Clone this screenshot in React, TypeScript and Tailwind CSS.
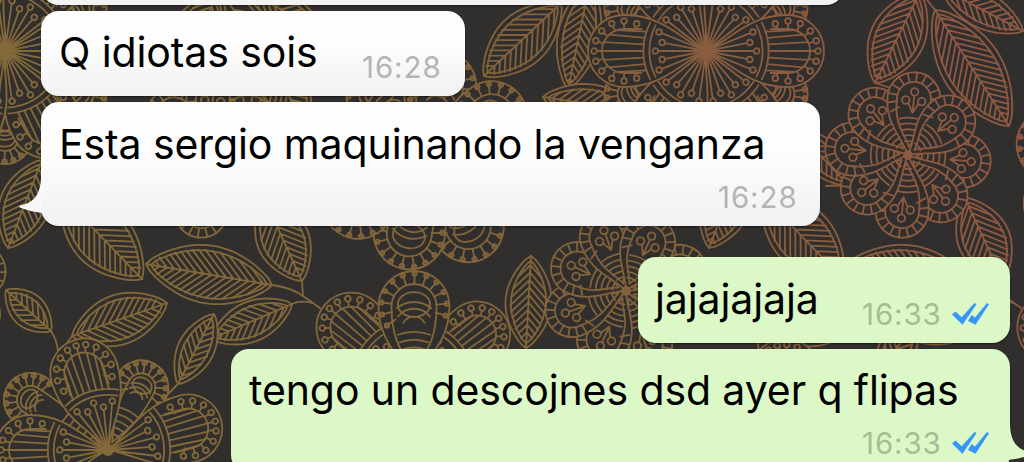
import React from "react";

type Pt = [number, number];

const line = (pts: Pt[], close = false) =>
  "M" + pts.map(([x, y]) => `${x.toFixed(1)} ${y.toFixed(1)}`).join("L") + (close ? "Z" : "");

/* A leaf drawn between two points: double outline, midrib and slanted veins. */
function Leaf({ a, b, w }: { a: Pt; b: Pt; w: number }) {
  const len = Math.hypot(b[0] - a[0], b[1] - a[1]);
  const ang = (Math.atan2(b[1] - a[1], b[0] - a[0]) * 180) / Math.PI;
  const half = (t: number, k: number) => k * Math.pow(Math.sin(Math.PI * Math.min(1, Math.max(0, t))), 0.74);
  const outline = (from: number, to: number, k: number): Pt[] => {
    const top: Pt[] = [];
    const low: Pt[] = [];
    for (let i = 0; i <= 30; i++) {
      const t = i / 30;
      top.push([from + (to - from) * t, -half(t, k)]);
      low.unshift([from + (to - from) * t, half(t, k)]);
    }
    return [...top, ...low];
  };
  const from = 5;
  const to = len - 5;
  const k = w / 2 - 5.5;
  let veins = "";
  for (let x = from + 4; x < to - 5; x += 7.5) {
    for (const s of [-1, 1]) {
      let d = 0;
      while (d < 40 && d * 0.95 < half((x + d - from) / (to - from), k)) d += 1;
      veins += line([[x, 0], [x + d, s * d * 0.95]]);
    }
  }
  return (
    <g transform={`translate(${a[0]} ${a[1]}) rotate(${ang})`}>
      <path d={line(outline(0, len, w / 2), true)} fill="#000" />
      <path d={line(outline(from, to, k), true)} />
      <path d={line([[0, 0], [len, 0]]) + veins} />
    </g>
  );
}

const tear = (len: number, w: number, x0 = 0) => {
  const r = w / 2;
  return `M${x0} 0C${x0 + (len - x0) * 0.2} ${-w * 0.14} ${len * 0.35} ${-r} ${len - r} ${-r}A${r} ${r} 0 0 1 ${len - r} ${r}C${len * 0.35} ${r} ${x0 + (len - x0) * 0.2} ${w * 0.14} ${x0} 0Z`;
};

const rad = (d: number) => (d * Math.PI) / 180;

const arc = (cx: number, r: number, deg: number) => {
  const x = cx + r * Math.cos(rad(deg));
  const y = r * Math.sin(rad(deg));
  return `M${x} ${-y}A${r} ${r} 0 0 1 ${x} ${y}`;
};

/* Long petal: a beaded rim, a fan of rays and stamens. */
function BeadPetal({ len, w, angle }: { len: number; w: number; angle: number }) {
  const r = w / 2;
  const c = len - r;
  const ri = r - 14;
  const rim = [-115, -90, -66, -42, -20, 0, 20, 42, 66, 90, 115];
  const mid = len * 0.48;
  return (
    <g transform={`rotate(${angle})`}>
      <path d={tear(len, w)} fill="#000" />
      {rim.map((d) => (
        <g key={d}>
          <circle cx={c + (r - 6) * Math.cos(rad(d))} cy={(r - 6) * Math.sin(rad(d))} r={2.8} />
          <path d={`M${c + ri * Math.cos(rad(d))} ${ri * Math.sin(rad(d))}L${c + (r - 9) * Math.cos(rad(d))} ${(r - 9) * Math.sin(rad(d))}`} />
        </g>
      ))}
      <path d={`M${mid + 8} ${-ri}L${c} ${-ri}A${ri} ${ri} 0 0 1 ${c} ${ri}L${mid + 8} ${ri}`} />
      <path d={arc(0, mid, 27) + arc(0, mid + 6, 27)} />
      {[-18, -12, -6, 0, 6, 12, 18].map((d) => (
        <path
          key={d}
          d={`M${(mid + 6) * Math.cos(rad(d))} ${(mid + 6) * Math.sin(rad(d))}L${c + ri * Math.cos(rad(d * 4))} ${ri * Math.sin(rad(d * 4))}`}
        />
      ))}
      {[-22, -11, 0, 11, 22].map((d, i) => {
        const q = i % 2 ? mid - 12 : mid - 6;
        return (
          <g key={d}>
            <path d={`M0 0L${(q - 3) * Math.cos(rad(d))} ${(q - 3) * Math.sin(rad(d))}`} />
            <circle cx={q * Math.cos(rad(d))} cy={q * Math.sin(rad(d))} r={2.8} />
          </g>
        );
      })}
    </g>
  );
}

/* Round petal: a spoked rim around three beads and nested arcs. */
function SpokePetal({ len, w, angle, ringed }: { len: number; w: number; angle: number; ringed?: boolean }) {
  const r = w / 2;
  const c = len - r;
  const ri = ringed ? r - 13 : r - 9.5;
  const spokes: number[] = [];
  for (let d = -125; d <= 125; d += 21) spokes.push(d);
  return (
    <g transform={`rotate(${angle})`}>
      <path d={tear(len, w)} fill="#000" />
      <path d={tear(c + ri, ri * 2, 8)} />
      {spokes.map((d) => (
        <path
          key={d}
          d={`M${c + ri * Math.cos(rad(d))} ${ri * Math.sin(rad(d))}L${c + r * Math.cos(rad(d))} ${r * Math.sin(rad(d))}`}
        />
      ))}
      {ringed ? (
        <>
          {spokes.map((d) => (
            <circle key={d} cx={c + (r - 2.5) * Math.cos(rad(d))} cy={(r - 2.5) * Math.sin(rad(d))} r={2.2} />
          ))}
          <ellipse cx={c + 2} cy={0} rx={ri * 0.55} ry={ri * 0.72} />
          <path d={arc(c - ri, ri * 0.9, 52) + arc(c - ri, ri * 1.2, 40) + arc(c - ri, ri * 0.55, 60)} />
        </>
      ) : (
        <>
          <circle cx={c + 7} cy={0} r={3.8} />
          <circle cx={c - 2} cy={-8} r={3.8} />
          <circle cx={c - 2} cy={8} r={3.8} />
          <path d={`M${c - 14} 0L${c + 3} 0M${c - 14} 0L${c - 5} -5M${c - 14} 0L${c - 5} 5`} />
        </>
      )}
      <path d={arc(0, len * 0.45, 19) + arc(0, len * 0.38, 20) + arc(0, len * 0.31, 20) + arc(0, len * 0.24, 20) + arc(0, len * 0.17, 20)} />
    </g>
  );
}

function Rosette({ x, y, n, len, w, turn, ringed }: { x: number; y: number; n: number; len: number; w: number; turn: number; ringed?: boolean }) {
  return (
    <g transform={`translate(${x} ${y})`}>
      {Array.from({ length: n }, (_, i) => (
        <SpokePetal key={i} len={len - (i % 2) * 4} w={w} angle={turn + (i * 360) / n} ringed={ringed} />
      ))}
      <circle r={4} fill="#fff" />
    </g>
  );
}

type Petal = { angle: number; len: number; w: number; round?: boolean };

function BigFlower({ x, y, petals }: { x: number; y: number; petals: Petal[] }) {
  return (
    <g transform={`translate(${x} ${y})`}>
      {petals.map(({ round, ...p }) => (round ? <SpokePetal key={p.angle} {...p} ringed /> : <BeadPetal key={p.angle} {...p} />))}
      <circle r={5} fill="#fff" />
    </g>
  );
}

const LEAVES: { a: Pt; b: Pt; w: number }[] = [
  { a: [561, 3], b: [484, 76], w: 52 },
  { a: [590, -18], b: [568, 89], w: 42 },
  { a: [543, 97], b: [640, 112], w: 40 },
  { a: [219, -8], b: [174, 83], w: 54 },
  { a: [234, 10], b: [308, 126], w: 60 },
  { a: [240, -12], b: [322, 31], w: 36 },
  { a: [94, 128], b: [147, 185], w: 34 },
  { a: [42, 160], b: [8, 248], w: 50 },
  { a: [62, 196], b: [142, 279], w: 60 },
  { a: [272, 285], b: [146, 264], w: 58 },
  { a: [264, 198], b: [302, 281], w: 52 },
  { a: [72, 336], b: [167, 303], w: 50 },
  { a: [51, 331], b: [6, 290], w: 34 },
  { a: [292, 304], b: [211, 339], w: 40 },
  { a: [178, 384], b: [214, 314], w: 36 },
  { a: [531, 256], b: [526, 348], w: 46 },
];

const SUN: Petal[] = [
  ...[30, 90, 150, 210, 270, 330].map((angle) => ({ angle, len: 113, w: 54, round: true })),
  ...[60, 120, 240, 300, 0, 180].map((angle) => ({ angle, len: 118, w: 72 })),
];

const CORNER: Petal[] = [
  { angle: -147, len: 119, w: 54, round: true },
  { angle: -62, len: 98, w: 54, round: true },
  { angle: 180, len: 113, w: 70 },
  { angle: -107, len: 115, w: 68 },
  { angle: -15, len: 117, w: 68 },
];

const SPRAY: Petal[] = [
  { angle: -139, len: 118, w: 70 },
  { angle: -37, len: 112, w: 66 },
  { angle: -90, len: 111, w: 71, round: true },
];

function Tile({ dx }: { dx: number }) {
  return (
    <g transform={`translate(${dx} 0)`}>
      {LEAVES.map((l, i) => (
        <Leaf key={i} {...l} />
      ))}
      <path d="M272 285Q290 287 303 296L320 308M302 281L303 296M292 304Q300 300 312 303M72 336L62 350M51 331Q56 338 58 350M178 384L164 398M234 10L223 -4M174 83L190 88M147 185L125 186" />
      <Rosette x={425} y={160} n={8} len={115} w={71} turn={57} ringed />
      <Rosette x={207} y={155} n={8} len={83} w={53} turn={6} />
      <BigFlower x={414} y={382} petals={SPRAY} />
      <Rosette x={626} y={291} n={8} len={84} w={53} turn={-20} />
      <BigFlower x={5} y={51} petals={SUN} />
      <BigFlower x={108} y={450} petals={CORNER} />
    </g>
  );
}

function Wallpaper() {
  return (
    <svg className="absolute inset-0 h-[462px] w-[1024px]" viewBox="0 0 1024 462" aria-hidden="true">
      <defs>
        <linearGradient id="ink" gradientUnits="userSpaceOnUse" x1="250" y1="430" x2="960" y2="80">
          <stop offset="0" stopColor="#83693a" />
          <stop offset="0.5" stopColor="#82623a" />
          <stop offset="1" stopColor="#8f5842" />
        </linearGradient>
        <mask id="lace" maskUnits="userSpaceOnUse" x="0" y="0" width="1024" height="462">
          <g fill="none" stroke="#fff" strokeWidth="1.8" strokeLinejoin="round" strokeLinecap="round">
            <Tile dx={-701} />
            <Tile dx={0} />
            <Tile dx={701} />
          </g>
        </mask>
      </defs>
      <rect width="1024" height="462" fill="url(#ink)" mask="url(#lace)" />
    </svg>
  );
}

function Ticks() {
  return (
    <svg className="ml-[8px] h-6 w-[38px] shrink-0" viewBox="0 0 38 24" fill="#3497f9" aria-hidden="true">
      <path d="M0 12.6L3.6 9.4L9.6 15.2L22.5 1L24.5 2.2L10.5 22.8Z" />
      <path d="M16 19L19.6 13L23 15.6L35 1L37 2.2L23.5 22.8Z" />
    </svg>
  );
}

function Time({ value, read }: { value: string; read?: boolean }) {
  return (
    <div className={`flex items-center text-[29.5px] leading-[30px] ${read ? "text-[#a5bc98]" : "text-[#b4b4b5]"}`}>
      <span className="-ml-px w-[82px] whitespace-nowrap font-normal tracking-[0.9px]">{value}</span>
      {read && <Ticks />}
    </div>
  );
}

const incoming = "relative rounded-[18px] bg-linear-to-b from-[#fdfdfd] from-40% to-[#f1f1f2] shadow-[0_1px_2px_rgba(0,0,0,0.45)]";
const outgoing = "relative rounded-[18px] bg-[#dcf8c7] shadow-[0_1px_2px_rgba(0,0,0,0.45)]";
const message = "whitespace-nowrap text-[41px] leading-[48px] tracking-[-0.1px] text-black";

export default function App() {
  return (
    <main className="relative h-[462px] w-[1024px] overflow-hidden bg-[#312f2d] font-['Inter',sans-serif]">
      <Wallpaper />
      <div className="relative flex flex-col items-start pr-[14px] pl-[41px]">
        <div className="-mt-[75px] h-20 w-[803px] rounded-[18px] bg-[#f3f3f4] shadow-[0_1px_2px_rgba(0,0,0,0.45)]" />

        <div className={`${incoming} mt-[6px] flex h-[85px] w-[424px] items-start justify-between pt-[17px] pr-[21px] pl-[18px]`}>
          <p className={message}>Q idiotas sois</p>
          <div className="pt-[24px]">
            <Time value="16:28" />
          </div>
        </div>

        <div className={`${incoming} mt-[6px] flex h-[124px] w-[779px] flex-col pt-[18px] pr-[20px] pl-[18px]`}>
          <svg className="absolute top-[74px] -left-[22px] h-[44px] w-[23px]" viewBox="0 0 23 44" fill="#f8f8f8" aria-hidden="true">
            <path d="M22 0C22 18 15 27 1 29.5Q-1 31 2 32Q12 36 23 37V0Z" />
          </svg>
          <p className={message}>Esta sergio maquinando la venganza</p>
          <div className="mt-[14px] self-end">
            <Time value="16:28" />
          </div>
        </div>

        <div className={`${outgoing} mt-[31px] flex h-[86px] w-[372px] items-start justify-between self-end pt-[18px] pr-[20px] pl-[17px]`}>
          <p className={message}>jajajajaja</p>
          <div className="pt-[24px]">
            <Time value="16:33" read />
          </div>
        </div>

        <div className={`${outgoing} mt-[6px] flex h-[124px] w-[779px] flex-col self-end pt-[17px] pr-[20px] pl-[18px]`}>
          <svg className="absolute top-[74px] -right-[22px] h-[44px] w-[30px]" viewBox="0 0 30 44" fill="#dcf8c7" aria-hidden="true">
            <path d="M8 0C8 18 15 27 29 29.5Q31 31 28 32Q18 36 6 37L0 38V0Z" />
          </svg>
          <p className={message}>tengo un descojnes dsd ayer q flipas</p>
          <div className="mt-[14px] self-end">
            <Time value="16:33" read />
          </div>
        </div>
      </div>
    </main>
  );
}
